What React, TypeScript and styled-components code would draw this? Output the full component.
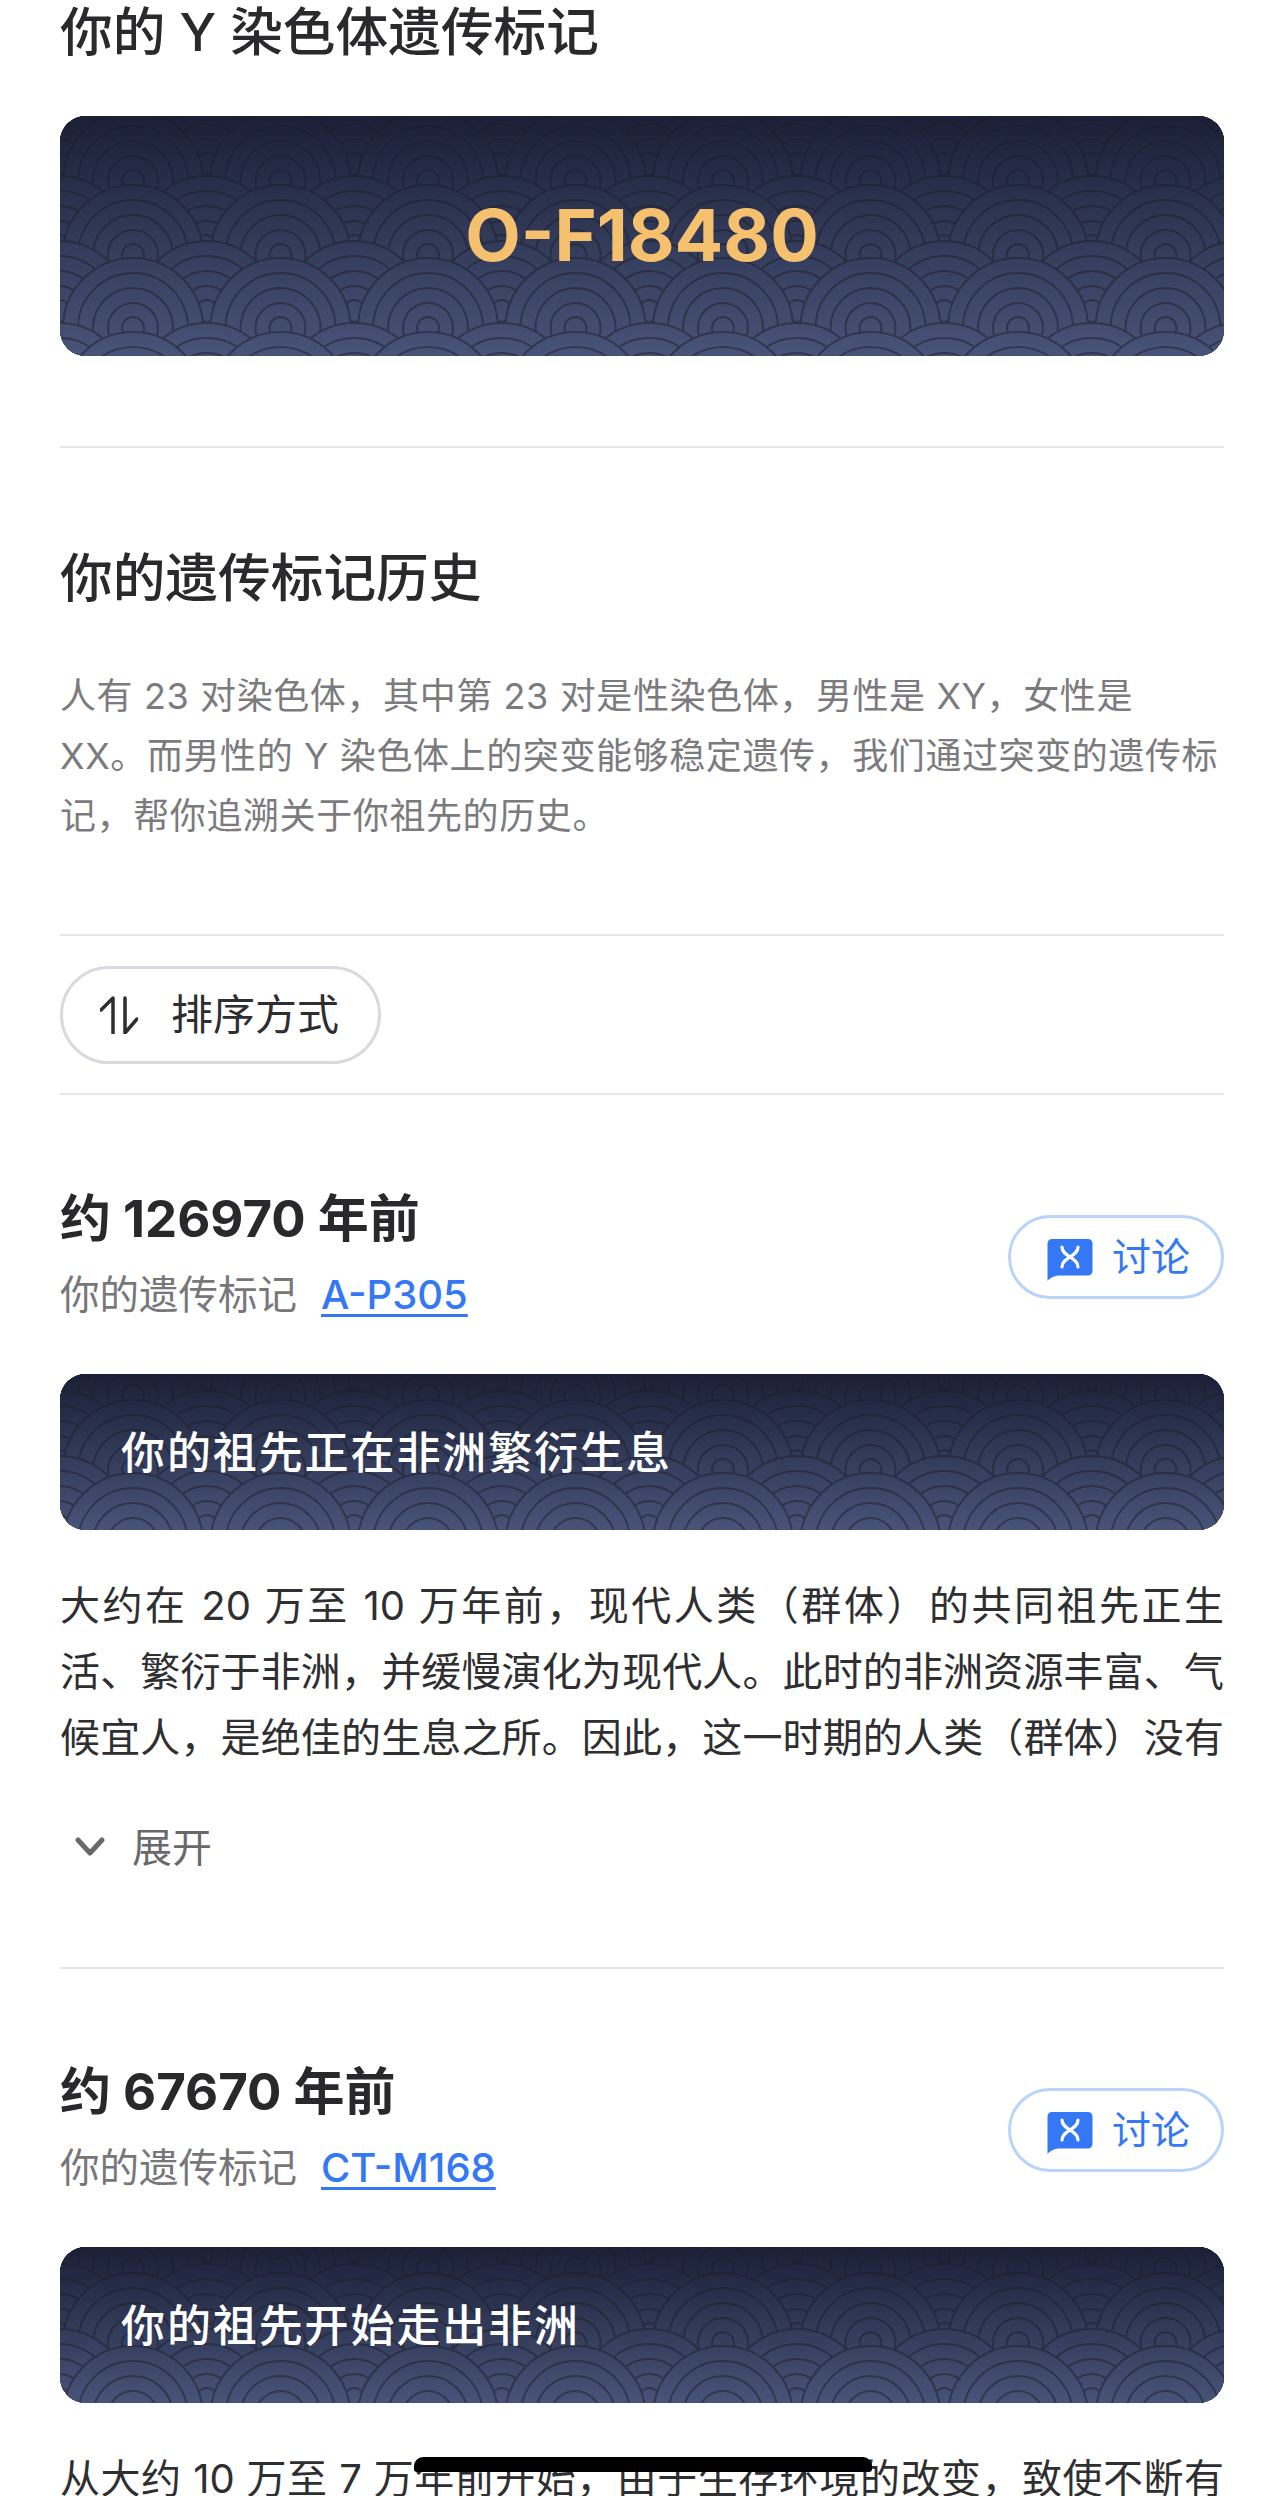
import React from "react";
import styled, { createGlobalStyle } from "styled-components";

const Global = createGlobalStyle`
  html, body { margin: 0; padding: 0; background: #fff; }
  body { font-family: "Inter", "Noto Sans CJK SC", sans-serif; }
`;

const Page = styled.div`
  position: relative;
  width: 1284px;
  height: 2496px;
  overflow: hidden;
  background: #fff;
`;
const Content = styled.main`
  padding: 0 60px;
  margin-top: -8px;
  display: flow-root;
`;
const Heading = styled.h2<{ $after: number }>`
  margin: 0 0 ${(p) => p.$after}px;
  font-size: 52.700px;
  line-height: 80px;
  font-weight: 500;
  color: #2a2a2c;
`;
const Divider = styled.hr<{ $before: number; $after: number }>`
  border: 0;
  height: 2px;
  background: #e6e6e8;
  margin: ${(p) => p.$before}px 0 ${(p) => p.$after}px;
`;
const Banner = styled.div<{ $height: number; $gapBefore?: number }>`
  position: relative;
  height: ${(p) => p.$height}px;
  margin-top: ${(p) => p.$gapBefore ?? 0}px;
  border-radius: 26px;
  overflow: hidden;
  display: flex;
  align-items: center;
`;
const PatternSvg = styled.svg`
  position: absolute;
  inset: 0;
  width: 100%;
  height: 100%;
`;
const Code = styled.div`
  position: relative;
  width: 100%;
  padding-bottom: 3px;
  text-align: center;
  font-size: 72px;
  font-weight: 700;
  color: #f6c16f;
`;
const BannerTitle = styled.div`
  position: relative;
  padding: 0 0 5px 61px;
  font-size: 44px;
  letter-spacing: 1.900px;
  font-weight: 500;
  color: #fff;
`;
const Intro = styled.p`
  margin: 0;
  font-size: 36px;
  letter-spacing: 0.600px;
  line-height: 60px;
  color: #7b7b7e;
`;
const SortButton = styled.button`
  display: flex;
  align-items: center;
  width: 321px;
  height: 98px;
  box-sizing: border-box;
  padding: 0 0 8px 37px;
  gap: 33px;
  border: 3px solid #d9d9df;
  border-radius: 50px;
  background: #fff;
  font: inherit;
  font-size: 42px;
  color: #2e2e30;
`;
const SortIcon = styled.svg`
  flex: none;
  margin-top: 8px;
`;
const ItemHeader = styled.header`
  display: flex;
  justify-content: space-between;
  align-items: center;
`;
const ItemTitle = styled.div`
  font-size: 51px;
  line-height: 70px;
  font-weight: 700;
  color: #29292b;
  margin-bottom: 11px;
`;
const ItemSub = styled.div`
  display: flex;
  gap: 24px;
  font-size: 39.500px;
  line-height: 60px;
  color: #77777a;
`;
const MarkerLink = styled.a`
  color: #3478f6;
  font-weight: 500;
  text-decoration: underline;
  text-decoration-thickness: 3px;
  text-underline-offset: 5px;
  font-size: 40px;
`;
const Discuss = styled.button`
  display: flex;
  align-items: center;
  gap: 19px;
  width: 216px;
  height: 84px;
  margin-top: 4px;
  box-sizing: border-box;
  padding: 0 0 6px 36px;
  border: 3px solid #b8d4fb;
  border-radius: 42px;
  background: #fff;
  font: inherit;
  font-size: 39px;
  color: #3478f6;
`;
const DiscussIcon = styled.svg`
  flex: none;
  margin-top: 12px;
`;
const Body = styled.p`
  margin: 43px 0 0;
  font-size: 40px;
  line-height: 66px;
  color: #2f2f31;
  text-align: justify;
  text-align-last: justify;
`;
const Expand = styled.div`
  display: flex;
  align-items: center;
  gap: 27px;
  height: 60px;
  margin: 46px 0 90px;
  padding: 0 0 5px 15px;
  box-sizing: border-box;
  font-size: 40px;
  color: #69696c;
`;
const Chevron = styled.svg`
  flex: none;
  margin-top: 5px;
`;
const HomeBar = styled.div`
  position: absolute;
  left: 414px;
  top: 2457px;
  width: 458px;
  height: 15px;
  background: #000;
  border-radius: 9px 9px 3px 3px;
`;

function Waves({ id, base, height }: { id: string; base: number; height: number }) {
  const stepX = 147.500;
  const rows: { y: number; off: boolean }[] = [];
  // Two rows of the wave repeat every 147px, each with its own staggered row behind it.
  for (let k = -1; k < 3; k++) {
    const x = base + k * 147;
    rows.push({ y: x, off: false }, { y: x - 17, off: true });
    rows.push({ y: x + 74, off: false }, { y: x + 65, off: true });
  }
  const circles: { x: number; y: number }[] = [];
  rows.forEach((r) => {
    for (let i = -1; i < 10; i++) {
      circles.push({ x: 73 + i * stepX + (r.off ? stepX / 2 : 0), y: r.y });
    }
  });
  circles.sort((a, b) => a.y - b.y);
  return (
    <PatternSvg aria-hidden="true">
      <defs>
        <linearGradient id={id} gradientUnits="userSpaceOnUse" x1="0" y1="0" x2="0" y2={height}>
          <stop offset="0" stopColor="#1b2037" />
          <stop offset="1" stopColor="#475378" />
        </linearGradient>
        <linearGradient id={`${id}s`} gradientUnits="userSpaceOnUse" x1="0" y1="0" x2="0" y2={height}>
          <stop offset="0" stopColor="#1b1e30" />
          <stop offset="1" stopColor="#33384f" />
        </linearGradient>
      </defs>
      <rect width="1164" height={height} fill={`url(#${id})`} />
      {circles.map((c, i) => (
        <g key={i} fill={`url(#${id})`} stroke={`url(#${id}s)`} strokeWidth="2">
          {[70, 55, 40, 25, 11].map((r) => (
            <circle key={r} cx={c.x} cy={c.y} r={r} />
          ))}
        </g>
      ))}
    </PatternSvg>
  );
}

function Item({ id, age, marker, title, base, text }: {
  id: string; age: string; marker: string; title: string; base: number; text: string;
}) {
  return (
    <section>
      <ItemHeader>
        <div>
          <ItemTitle>{age}</ItemTitle>
          <ItemSub>
            你的遗传标记
            <MarkerLink>{marker}</MarkerLink>
          </ItemSub>
        </div>
        <Discuss>
          <DiscussIcon width="46" height="42" viewBox="0 0 46 42">
            <path
              d="M5 0H41a4.500 4.500 0 0 1 4.500 4.500V32a4.500 4.500 0 0 1-4.500 4.500H14C8 36.500 3 38.500 .5 42V4.500A4.500 4.500 0 0 1 5 0Z"
              fill="#3478f6"
            />
            <path
              d="M15 8C15 18 31 18 31 28M31 8C31 18 15 18 15 28"
              fill="none"
              stroke="#fff"
              strokeWidth="3.200"
              strokeLinecap="round"
            />
          </DiscussIcon>
          讨论
        </Discuss>
      </ItemHeader>
      <Banner $height={156} $gapBefore={49}>
        <Waves id={id} base={base} height={156} />
        <BannerTitle>{title}</BannerTitle>
      </Banner>
      <Body>{text}</Body>
    </section>
  );
}

export default function App() {
  return (
    <Page>
      <Global />
      <Content>
        <Heading $after={44}>你的 Y 染色体遗传标记</Heading>
        <Banner $height={240}>
          <Waves id="w0" base={65} height={240} />
          <Code>O-F18480</Code>
        </Banner>
        <Divider $before={90} $after={90} />
        <Heading $after={48}>你的遗传标记历史</Heading>
        <Intro>
          人有 23 对染色体，其中第 23 对是性染色体，男性是 XY，女性是
          <br />
          XX。而男性的 Y 染色体上的突变能够稳定遗传，我们通过突变的遗传标
          <br />
          记，帮你追溯关于你祖先的历史。
        </Intro>
        <Divider $before={88} $after={30} />
        <SortButton>
          <SortIcon width="38" height="38" viewBox="0 0 38 38" fill="none" stroke="#2e2e30" strokeWidth="3.500" strokeLinecap="round" strokeLinejoin="round">
            <path d="M13 37V2L1 14M25 37V2M25 37L37 23" />
          </SortIcon>
          排序方式
        </SortButton>
        <Divider $before={29} $after={89} />
        <Item
          id="w1"
          age="约 126970 年前"
          marker="A-P305"
          title="你的祖先正在非洲繁衍生息"
          base={22}
          text="大约在 20 万至 10 万年前，现代人类（群体）的共同祖先正生活、繁衍于非洲，并缓慢演化为现代人。此时的非洲资源丰富、气候宜人，是绝佳的生息之所。因此，这一时期的人类（群体）没有"
        />
        <Expand>
          <Chevron width="30" height="20" viewBox="0 0 30 20" fill="none" stroke="#69696c" strokeWidth="5" strokeLinecap="round" strokeLinejoin="round">
            <path d="M3 3l12 13L27 3" />
          </Chevron>
          展开
        </Expand>
        <Divider $before={0} $after={88} />
        <Item
          id="w2"
          age="约 67670 年前"
          marker="CT-M168"
          title="你的祖先开始走出非洲"
          base={22}
          text="从大约 10 万至 7 万年前开始，由于生存环境的改变，致使不断有"
        />
      </Content>
      <HomeBar />
    </Page>
  );
}
